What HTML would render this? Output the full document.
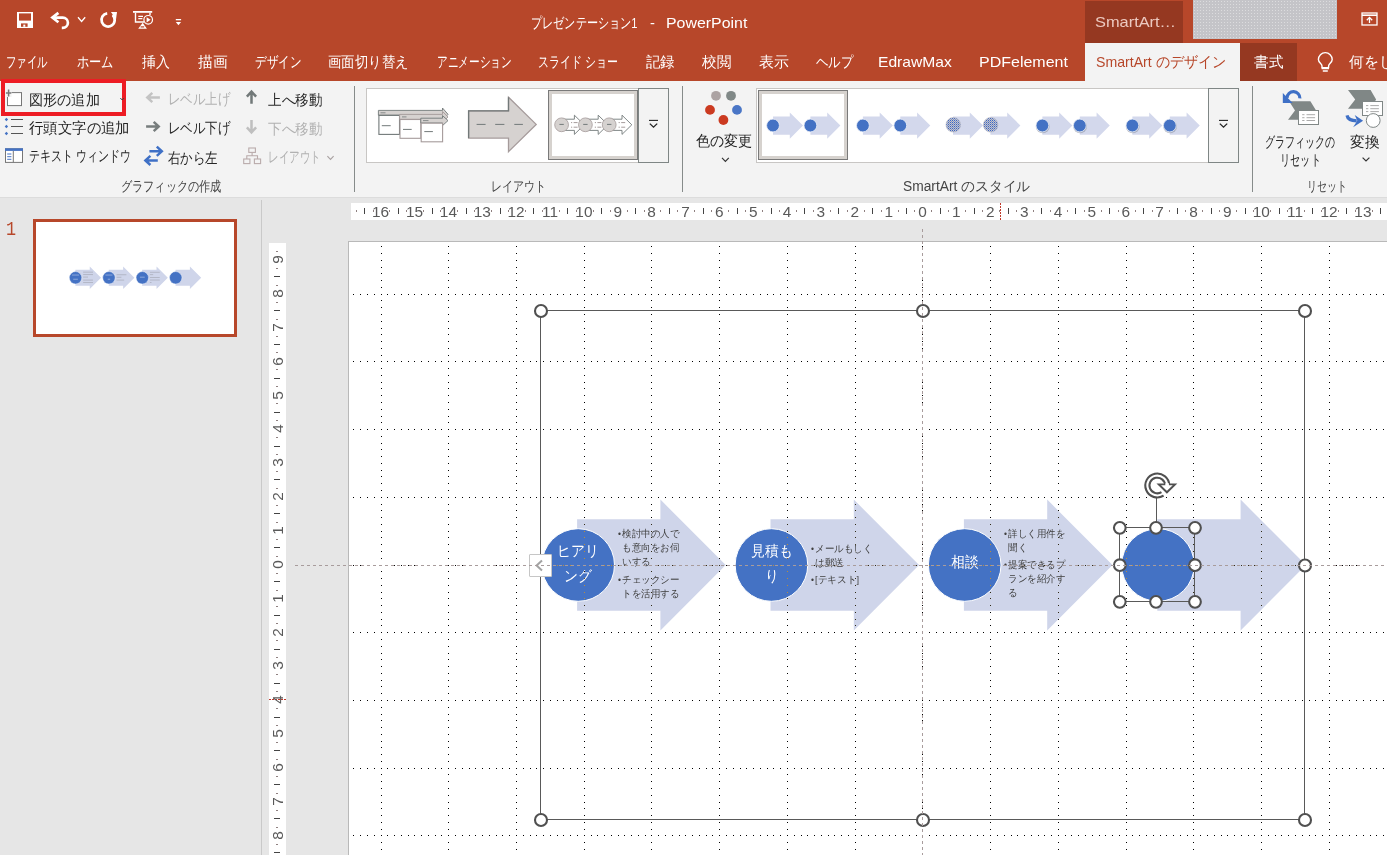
<!DOCTYPE html>
<html lang="ja"><head><meta charset="utf-8"><title>PowerPoint</title><style>
html,body{margin:0;padding:0;}
body{width:1387px;height:855px;overflow:hidden;position:relative;background:#e6e6e6;font-family:"Liberation Sans",sans-serif;}
.a{position:absolute;}
.rn{position:absolute;width:30px;text-align:center;font-size:15.4px;line-height:17px;color:#595959;}
.rv{position:absolute;width:30px;height:17px;text-align:center;font-size:15.4px;line-height:17px;color:#595959;transform:rotate(-90deg);}
.t{position:absolute;white-space:nowrap;transform-origin:0 50%;display:block;}
svg{position:absolute;left:0;top:0;overflow:visible;}
</style></head>
<body>
<div class="a" id="titlebar" style="left:0;top:0;width:1387px;height:81px;background:#B7472A"></div>
<div class="a" style="left:1085px;top:1px;width:98px;height:43px;background:#953821"></div>
<div class="a" style="left:1193px;top:0;width:144px;height:39px;background:#c4c4c8 radial-gradient(circle,#dcdcde 0.7px,rgba(220,220,222,0) 1px) 0 0/3px 3px"></div>
<div class="a" style="left:1085px;top:43px;width:155px;height:38px;background:#f3f3f3"></div>
<div class="a" style="left:1240px;top:43px;width:57px;height:38px;background:#953821"></div>
<span class="t" style="left:531.2px;top:11.8px;font-size:15px;line-height:21px;color:#fff;transform:scaleX(0.7430);">プレゼンテーション1</span>
<span class="t" style="left:650.1px;top:11.8px;font-size:15px;line-height:21px;color:#fff;transform:scaleX(0.9800);">-</span>
<span class="t" style="left:665.8px;top:12.3px;font-size:15.5px;line-height:22px;color:#fff;transform:scaleX(1.0269);">PowerPoint</span>
<span class="t" style="left:1094.5px;top:11.0px;font-size:15px;line-height:21px;color:#ecc9c0;transform:scaleX(1.0918);">SmartArt…</span>
<span class="t" style="left:5.8px;top:50.8px;font-size:15px;line-height:21px;color:#fff;transform:scaleX(0.6933);">ファイル</span>
<span class="t" style="left:77.3px;top:50.8px;font-size:15px;line-height:21px;color:#fff;transform:scaleX(0.8133);">ホーム</span>
<span class="t" style="left:141.6px;top:50.8px;font-size:15px;line-height:21px;color:#fff;transform:scaleX(0.9267);">挿入</span>
<span class="t" style="left:198.2px;top:50.8px;font-size:15px;line-height:21px;color:#fff;transform:scaleX(0.9833);">描画</span>
<span class="t" style="left:254.8px;top:50.8px;font-size:15px;line-height:21px;color:#fff;transform:scaleX(0.7683);">デザイン</span>
<span class="t" style="left:328.0px;top:50.8px;font-size:15px;line-height:21px;color:#fff;transform:scaleX(0.8922);">画面切り替え</span>
<span class="t" style="left:436.9px;top:50.8px;font-size:15px;line-height:21px;color:#fff;transform:scaleX(0.7105);">アニメーション</span>
<span class="t" style="left:537.6px;top:50.8px;font-size:15px;line-height:21px;color:#fff;transform:scaleX(0.7291);">スライド ショー</span>
<span class="t" style="left:646.0px;top:50.8px;font-size:15px;line-height:21px;color:#fff;transform:scaleX(0.9600);">記録</span>
<span class="t" style="left:702.0px;top:50.8px;font-size:15px;line-height:21px;color:#fff;transform:scaleX(0.9667);">校閲</span>
<span class="t" style="left:758.9px;top:50.8px;font-size:15px;line-height:21px;color:#fff;transform:scaleX(0.9933);">表示</span>
<span class="t" style="left:815.5px;top:50.8px;font-size:15px;line-height:21px;color:#fff;transform:scaleX(0.8267);">ヘルプ</span>
<span class="t" style="left:878.2px;top:50.8px;font-size:15px;line-height:21px;color:#fff;transform:scaleX(1.0415);">EdrawMax</span>
<span class="t" style="left:978.9px;top:50.8px;font-size:15px;line-height:21px;color:#fff;transform:scaleX(1.0663);">PDFelement</span>
<span class="t" style="left:1096.3px;top:51.0px;font-size:15px;line-height:21px;color:#B7472A;transform:scaleX(0.9419);">SmartArt のデザイン</span>
<span class="t" style="left:1254.4px;top:51.0px;font-size:15px;line-height:21px;color:#fff;transform:scaleX(0.9733);">書式</span>
<span class="t" style="left:1349.4px;top:51.0px;font-size:15px;line-height:21px;color:#fff;transform:scaleX(0.9911);">何をし</span>
<div class="a" id="ribbon" style="left:0;top:81px;width:1387px;height:116px;background:#f3f3f3;border-bottom:1px solid #dcdcdc"></div>
<div class="a" style="left:354px;top:86px;width:1px;height:106px;background:#868b8a"></div>
<div class="a" style="left:682px;top:86px;width:1px;height:106px;background:#868b8a"></div>
<div class="a" style="left:1252px;top:86px;width:1px;height:106px;background:#868b8a"></div>
<span class="t" style="left:121.0px;top:176.0px;font-size:14px;line-height:20px;color:#444;transform:scaleX(0.7976);">グラフィックの作成</span>
<span class="t" style="left:491.3px;top:176.0px;font-size:14px;line-height:20px;color:#444;transform:scaleX(0.7857);">レイアウト</span>
<span class="t" style="left:903.3px;top:176.0px;font-size:14px;line-height:20px;color:#444;transform:scaleX(0.9851);">SmartArt のスタイル</span>
<span class="t" style="left:1306.7px;top:176.0px;font-size:14px;line-height:20px;color:#444;transform:scaleX(0.7125);">リセット</span>
<span class="t" style="left:28.5px;top:88.5px;font-size:15px;line-height:21px;color:#262626;transform:scaleX(0.9427);">図形の追加</span>
<span class="t" style="left:28.5px;top:117.0px;font-size:15px;line-height:21px;color:#262626;transform:scaleX(0.9610);">行頭文字の追加</span>
<span class="t" style="left:28.5px;top:145.2px;font-size:15px;line-height:21px;color:#262626;transform:scaleX(0.7293);">テキスト ウィンドウ</span>
<span class="t" style="left:167.8px;top:87.5px;font-size:15px;line-height:21px;color:#b1b1b1;transform:scaleX(0.8307);">レベル上げ</span>
<span class="t" style="left:167.8px;top:116.5px;font-size:15px;line-height:21px;color:#262626;transform:scaleX(0.8307);">レベル下げ</span>
<span class="t" style="left:167.8px;top:146.5px;font-size:15px;line-height:21px;color:#262626;transform:scaleX(0.8283);">右から左</span>
<span class="t" style="left:267.5px;top:88.5px;font-size:15px;line-height:21px;color:#262626;transform:scaleX(0.9033);">上へ移動</span>
<span class="t" style="left:267.5px;top:117.5px;font-size:15px;line-height:21px;color:#b1b1b1;transform:scaleX(0.9033);">下へ移動</span>
<span class="t" style="left:267.5px;top:145.5px;font-size:15px;line-height:21px;color:#b1b1b1;transform:scaleX(0.7067);">レイアウト</span>
<div class="a" style="left:1px;top:79.3px;width:117.4px;height:28.5px;border:4.8px solid #ed1c24"></div>
<div class="a" style="left:366px;top:88px;width:273px;height:75px;background:#fff;border:1px solid #c8c6c4;box-sizing:border-box"></div>
<div class="a" style="left:638px;top:88px;width:31px;height:75px;background:#f3f3f3;border:1px solid #7f8685;box-sizing:border-box"></div>
<div class="a" style="left:756px;top:88px;width:453px;height:75px;background:#fff;border:1px solid #c8c6c4;box-sizing:border-box"></div>
<div class="a" style="left:1208px;top:88px;width:31px;height:75px;background:#f3f3f3;border:1px solid #7f8685;box-sizing:border-box"></div>
<div class="a" style="left:548px;top:90px;width:90px;height:70px;background:#fff;border:4px solid #d6d2ce;outline:1px solid #7a7a7a;outline-offset:-1px;box-sizing:border-box"></div>
<div class="a" style="left:758px;top:90px;width:90px;height:70px;background:#fff;border:4px solid #d6d2ce;outline:1px solid #7a7a7a;outline-offset:-1px;box-sizing:border-box"></div>
<span class="t" style="left:695.6px;top:130.1px;font-size:15px;line-height:21px;color:#262626;transform:scaleX(0.9383);">色の変更</span>
<span class="t" style="left:1265.4px;top:130.5px;font-size:15px;line-height:21px;color:#262626;transform:scaleX(0.6686);">グラフィックの</span>
<span class="t" style="left:1280.0px;top:148.8px;font-size:15px;line-height:21px;color:#262626;transform:scaleX(0.6783);">リセット</span>
<span class="t" style="left:1350.4px;top:130.5px;font-size:15px;line-height:21px;color:#262626;transform:scaleX(0.9833);">変換</span>
<svg width="1387" height="200" viewBox="0 0 1387 200">
<defs><pattern id="tex" width="2" height="2" patternUnits="userSpaceOnUse"><rect width="2" height="2" fill="#c4c4cc"/><rect width="1" height="1" fill="#3a66c4"/><rect x="1" y="1" width="1" height="1" fill="#7f93c4"/></pattern></defs>
<rect x="17" y="12" width="16" height="16" fill="#fff"/>
<rect x="19" y="13.4" width="12" height="7.2" fill="#B7472A"/>
<rect x="21" y="23.4" width="6.6" height="3.4" fill="#B7472A"/>
<rect x="23.3" y="24.6" width="2" height="2.2" fill="#fff"/>
<path d="M53 17.6 H62.8 A5.1 5.1 0 0 1 62.8 27.8 H61.8" fill="none" stroke="#fff" stroke-width="2.7"/>
<path d="M58.4 12.9 L52.4 17.6 L58.4 22.3" fill="none" stroke="#fff" stroke-width="2.7" stroke-linejoin="miter"/>
<path d="M78 17.3 L81.6 21.4 L85.2 17.3" fill="none" stroke="#fff" stroke-width="1.3"/>
<path d="M112.5 15.0 A6.6 6.6 0 1 1 107.2 13.36" fill="none" stroke="#fff" stroke-width="2.7"/>
<path d="M109.7 11 L112.2 20.5" stroke="#B7472A" stroke-width="1.5"/>
<path d="M110.9 11.9 L117 11.9 L116 19.3 Z" fill="#fff"/>
<rect x="133" y="11" width="19.2" height="1.8" fill="#fff"/>
<path d="M135.5 12.8 V22 H144" fill="none" stroke="#fff" stroke-width="1.4"/>
<path d="M150 12.8 V15" fill="none" stroke="#fff" stroke-width="1.4"/>
<path d="M138.3 16.4 H143 M138.3 18.7 H142.4" fill="none" stroke="#fff" stroke-width="1.2"/>
<circle cx="148.2" cy="19.8" r="4.3" fill="none" stroke="#fff" stroke-width="1.2"/>
<path d="M146.6 17.2 L150.6 19.8 L146.6 22.4 Z" fill="#fff"/>
<path d="M142.7 22.8 L146.9 28.8 L138.2 28.8 Z" fill="#fff"/>
<rect x="140.6" y="26.3" width="3.6" height="1.2" fill="#B7472A"/>
<rect x="175.8" y="19" width="5.3" height="1.3" fill="#fff"/>
<path d="M175.8 22 H181.1 L178.45 25.2 Z" fill="#fff"/>
<rect x="1362" y="13" width="15" height="12" fill="none" stroke="#fff" stroke-width="1.3"/>
<path d="M1362 15.2 H1377" stroke="#fff" stroke-width="1.6"/>
<path d="M1369.5 23 V17.6 M1366.8 20.2 L1369.5 17.4 L1372.2 20.2" fill="none" stroke="#fff" stroke-width="1.3"/>
<path d="M1322 67.6 V66 C1322 63.8 1318.4 62.6 1318.4 59.5 A6.9 6.9 0 0 1 1332.2 59.5 C1332.2 62.6 1328.6 63.8 1328.6 66 V67.6 Z" fill="none" stroke="#fff" stroke-width="1.4"/>
<path d="M1321.6 68.4 H1329 M1322.8 71 H1327.8" stroke="#fff" stroke-width="1.6"/>
<rect x="7.5" y="92.6" width="14" height="13" fill="#fff" stroke="#767676" stroke-width="1"/>
<rect x="5.6" y="88.6" width="6" height="8.4" fill="#f3f3f3"/>
<path d="M8.6 89.6 V96.4 M5.9 92.9 H11.3" stroke="#767676" stroke-width="1.5"/>
<path d="M120.3 98 L122.2 100 L124.1 98" fill="none" stroke="#444" stroke-width="1"/>
<path d="M6.4 117.8 l1.7 1.7 l-1.7 1.7 l-1.7 -1.7 Z" fill="#4472c4"/>
<rect x="11" y="119.0" width="12" height="1" fill="#555"/>
<path d="M6.4 124.8 l1.7 1.7 l-1.7 1.7 l-1.7 -1.7 Z" fill="#4472c4"/>
<rect x="11" y="126.0" width="12" height="1" fill="#555"/>
<path d="M6.4 131.8 l1.7 1.7 l-1.7 1.7 l-1.7 -1.7 Z" fill="#4472c4"/>
<rect x="11" y="133.0" width="12" height="1" fill="#555"/>
<rect x="5.5" y="148.8" width="17" height="13.6" fill="#fff" stroke="#767676" stroke-width="1"/>
<rect x="5" y="148.3" width="18" height="2.6" fill="#4472c4"/>
<path d="M13.3 151 V162.4" stroke="#767676" stroke-width="1"/>
<path d="M7.2 154 H11.4 M7.2 156.7 H11.4 M7.2 159.3 H11.4" stroke="#4472c4" stroke-width="1"/>
<path d="M159.9 97.5 H147.6 M152.3 92.9 L147.3 97.5 L152.3 102.1" fill="none" stroke="#c3c3c3" stroke-width="2.5"/>
<path d="M146.1 126.5 H158.4 M153.7 121.9 L158.7 126.5 L153.7 131.1" fill="none" stroke="#777d7d" stroke-width="2.5"/>
<path d="M149.4 151.3 H161.5 M156.8 146.7 L161.8 151.3 L156.8 155.9" fill="none" stroke="#3f70c6" stroke-width="2.5"/>
<path d="M157.8 160.4 H145.7 M150.4 155.8 L145.4 160.4 L150.4 165.0" fill="none" stroke="#3f70c6" stroke-width="2.5"/>
<path d="M251.5 103.8 V91.9 M246.9 96.6 L251.5 91.6 L256.1 96.6" fill="none" stroke="#727979" stroke-width="2.5"/>
<path d="M251.5 120.0 V132.1 M246.9 127.4 L251.5 132.4 L256.1 127.4" fill="none" stroke="#bfbfbf" stroke-width="2.5"/>
<rect x="248.8" y="148" width="6.6" height="4.4" fill="none" stroke="#b9abab" stroke-width="1.1"/>
<rect x="243.7" y="159" width="6.2" height="4.6" fill="none" stroke="#b9abab" stroke-width="1.1"/>
<rect x="254.4" y="159" width="6.2" height="4.6" fill="none" stroke="#b9abab" stroke-width="1.1"/>
<path d="M252.1 152.4 V155.8 M246.8 159 V155.8 H257.5 V159" fill="none" stroke="#b9abab" stroke-width="1.1"/>
<path d="M327.4 156.2 L330.5 159.4 L333.6 156.2" fill="none" stroke="#a8a0a0" stroke-width="1.1"/>
<path d="M378.4 110.4 H442.5 V108 L448 114.3 L442.5 120.5 V115.2 H378.4 Z" fill="#d6d2d0" stroke="#727979" stroke-width="0.9"/>
<rect x="378.9" y="115.4" width="20.6" height="19" fill="#fff" stroke="#727979" stroke-width="1.1"/>
<path d="M399.6 114.4 H442.5 V111.5 L448 117 L442.5 122.5 V119.3 H399.6 Z" fill="#d6d2d0" stroke="#a59b9b" stroke-width="0.9"/>
<rect x="400" y="119.5" width="20.8" height="18.8" fill="#fff" stroke="#a59b9b" stroke-width="1.1"/>
<path d="M420.8 118.2 H442.5 V115.6 L448 120.6 L442.5 125.6 V123 H420.8 Z" fill="#d6d2d0" stroke="#727979" stroke-width="0.9"/>
<rect x="421.2" y="123.2" width="21.4" height="18.6" fill="#fff" stroke="#a59b9b" stroke-width="1.1"/>
<path d="M381.8 125.7 H390.7 M403 129.4 H411.7 M424.3 131.6 H432.9" stroke="#727979" stroke-width="1"/>
<path d="M380.5 112.8 H385.5 M402 116.9 H406.5 M423 120.6 H428.5" stroke="#727979" stroke-width="0.8"/>
<path d="M468.6 110.9 H508.5 V97.2 L536.2 124.4 L508.5 151.6 V138.1 H468.6 Z" fill="#d6d2d0" stroke="#a59b9b" stroke-width="1.3" stroke-linejoin="miter"/>
<path d="M468.6 138.1 V110.9 H508.5 V97.2" fill="none" stroke="#727979" stroke-width="1.3"/>
<path d="M476.6 124.4 H485.6 M495.2 124.4 H504.4 M514.3 124.4 H522.9" stroke="#727979" stroke-width="1"/>
<path d="M561.6 119.2 H574.4 V115.2 L584.2 124.8 L574.4 134.4 V130.4 H561.6 Z" fill="#fff" stroke="#727979" stroke-width="0.9"/>
<path d="M571.0 122.6 h1.2 M573.6 122.6 h4 M571.0 127.2 h1.2 M573.6 127.2 h4" stroke="#a59b9b" stroke-width="1"/>
<path d="M585.4 119.2 H598.2 V115.2 L608.0 124.8 L598.2 134.4 V130.4 H585.4 Z" fill="#fff" stroke="#727979" stroke-width="0.9"/>
<path d="M594.8 122.6 h1.2 M597.4 122.6 h4 M594.8 127.2 h1.2 M597.4 127.2 h4" stroke="#a59b9b" stroke-width="1"/>
<path d="M609.2 119.2 H622.0 V115.2 L631.8 124.8 L622.0 134.4 V130.4 H609.2 Z" fill="#fff" stroke="#727979" stroke-width="0.9"/>
<path d="M618.6 122.6 h1.2 M621.2 122.6 h4 M618.6 127.2 h1.2 M621.2 127.2 h4" stroke="#a59b9b" stroke-width="1"/>
<circle cx="561.6" cy="124.8" r="6.9" fill="#d6d2d0" stroke="#a59b9b" stroke-width="0.8"/>
<path d="M559.4 124.4 h4.4" stroke="#727979" stroke-width="1"/>
<circle cx="585.4" cy="124.8" r="6.9" fill="#d6d2d0" stroke="#a59b9b" stroke-width="0.8"/>
<path d="M583.2 124.4 h4.4" stroke="#727979" stroke-width="1"/>
<circle cx="609.2" cy="124.8" r="6.9" fill="#d6d2d0" stroke="#a59b9b" stroke-width="0.8"/>
<path d="M607.0 124.4 h4.4" stroke="#727979" stroke-width="1"/>
<path d="M649.0 120.4 H658.0" stroke="#222" stroke-width="1.1"/>
<path d="M649.8 123.6 L653.5 127.2 L657.2 123.6" fill="none" stroke="#222" stroke-width="1.3"/>
<path d="M1219.0 120.4 H1228.0" stroke="#222" stroke-width="1.1"/>
<path d="M1219.8 123.6 L1223.5 127.2 L1227.2 123.6" fill="none" stroke="#222" stroke-width="1.3"/>
<circle cx="716.0" cy="95.8" r="4.9" fill="#aca3a3"/>
<circle cx="731.0" cy="95.8" r="4.9" fill="#808887"/>
<circle cx="710.0" cy="109.9" r="4.9" fill="#cb3a20"/>
<circle cx="737.0" cy="109.9" r="4.9" fill="#4a76c6"/>
<circle cx="723.4" cy="120.0" r="4.9" fill="#cb3a20"/>
<path d="M722 157.9 L725.4 161.3 L728.8 157.9" fill="none" stroke="#333" stroke-width="1.2"/>
<path d="M1362.6 157.6 L1366 161 L1369.4 157.6" fill="none" stroke="#333" stroke-width="1.2"/>
<path d="M773.0 116.4 H789.8 V112.4 L803.0 125.5 L789.8 138.7 V134.8 H773.0 Z" fill="#d3d8ec"/>
<path d="M810.4 116.4 H827.2 V112.4 L840.4 125.5 L827.2 138.7 V134.8 H810.4 Z" fill="#d3d8ec"/>
<circle cx="773.0" cy="125.5" r="6.4" fill="#4472c4" stroke="#eef0f7" stroke-width="0.8"/>
<circle cx="810.4" cy="125.5" r="6.4" fill="#4472c4" stroke="#eef0f7" stroke-width="0.8"/>
<path d="M862.9 116.4 H879.7 V112.4 L892.9 125.5 L879.7 138.7 V134.8 H862.9 Z" fill="#d3d8ec"/>
<path d="M900.3 116.4 H917.1 V112.4 L930.3 125.5 L917.1 138.7 V134.8 H900.3 Z" fill="#d3d8ec"/>
<circle cx="862.9" cy="125.5" r="6.4" fill="#4472c4" stroke="#eef0f7" stroke-width="0.8"/>
<circle cx="900.3" cy="125.5" r="6.4" fill="#4472c4" stroke="#eef0f7" stroke-width="0.8"/>
<path d="M953.0 116.4 H969.8 V112.4 L983.0 125.5 L969.8 138.7 V134.8 H953.0 Z" fill="#d3d8ec"/>
<path d="M990.4 116.4 H1007.2 V112.4 L1020.4 125.5 L1007.2 138.7 V134.8 H990.4 Z" fill="#d3d8ec"/>
<circle cx="953.3" cy="124.8" r="7.3" fill="url(#tex)" stroke="#b9b9c2" stroke-width="0.6"/>
<circle cx="990.7" cy="124.8" r="7.3" fill="url(#tex)" stroke="#b9b9c2" stroke-width="0.6"/>
<path d="M1042.4 116.4 H1059.2 V112.4 L1072.4 125.5 L1059.2 138.7 V134.8 H1042.4 Z" fill="#d3d8ec"/>
<path d="M1079.8 116.4 H1096.6 V112.4 L1109.8 125.5 L1096.6 138.7 V134.8 H1079.8 Z" fill="#d3d8ec"/>
<circle cx="1042.7" cy="126.4" r="6.9" fill="#8a8f9c" opacity="0.55"/>
<circle cx="1042.4" cy="125.5" r="6.4" fill="#4472c4" stroke="#eef0f7" stroke-width="0.8"/>
<circle cx="1080.1" cy="126.4" r="6.9" fill="#8a8f9c" opacity="0.55"/>
<circle cx="1079.8" cy="125.5" r="6.4" fill="#4472c4" stroke="#eef0f7" stroke-width="0.8"/>
<path d="M1132.4 116.4 H1149.2 V112.4 L1162.4 125.5 L1149.2 138.7 V134.8 H1132.4 Z" fill="#d3d8ec"/>
<path d="M1169.8 116.4 H1186.6 V112.4 L1199.8 125.5 L1186.6 138.7 V134.8 H1169.8 Z" fill="#d3d8ec"/>
<circle cx="1132.7" cy="126.4" r="6.9" fill="#8a8f9c" opacity="0.55"/>
<circle cx="1132.4" cy="125.5" r="6.4" fill="#4472c4" stroke="#eef0f7" stroke-width="0.8"/>
<circle cx="1170.1" cy="126.4" r="6.9" fill="#8a8f9c" opacity="0.55"/>
<circle cx="1169.8" cy="125.5" r="6.4" fill="#4472c4" stroke="#eef0f7" stroke-width="0.8"/>
<path d="M1289.1 101.3 L1310.4 101.3 L1316.1 110.6 L1310.4 119.8 L1288.0 119.8 L1295.0 110.6Z" fill="#808786"/>
<rect x="1298.5" y="110.5" width="20.0" height="14.0" fill="#fff" stroke="#808786" stroke-width="1"/>
<path d="M1302.2 114.7 H1304.5 M1306.5 114.7 H1315.1" stroke="#aaa" stroke-width="1"/>
<path d="M1302.2 117.7 H1304.5 M1306.5 117.7 H1315.1" stroke="#aaa" stroke-width="1"/>
<path d="M1302.2 120.5 H1304.5 M1306.5 120.5 H1315.1" stroke="#aaa" stroke-width="1"/>
<path d="M1299.9 98.4 A6.4 6.4 0 0 0 1287.0 97.9" fill="none" stroke="#3f70c6" stroke-width="3.2"/>
<path d="M1282.8 93.1 L1282.8 103.0 L1292.7 103.0Z" fill="#3f70c6"/>
<path d="M1348.0 90.0 L1370.6 90.0 L1376.1 99.4 L1370.6 108.7 L1348.0 108.7 L1355.2 99.4Z" fill="#808786"/>
<rect x="1362.5" y="101.5" width="20.0" height="14.0" fill="#fff" stroke="#808786" stroke-width="1"/>
<path d="M1366.0 105.6 H1368.3 M1370.3 105.6 H1378.9" stroke="#aaa" stroke-width="1"/>
<path d="M1366.0 108.7 H1368.3 M1370.3 108.7 H1378.9" stroke="#aaa" stroke-width="1"/>
<path d="M1366.0 111.6 H1368.3 M1370.3 111.6 H1378.9" stroke="#aaa" stroke-width="1"/>
<circle cx="1373.2" cy="120.5" r="6.9" fill="#fff" stroke="#808786" stroke-width="1"/>
<path d="M1347.0 115.4 Q1348.0 120.8 1356.7 120.8" fill="none" stroke="#3f70c6" stroke-width="3.2"/>
<path d="M1354.7 114.9 L1363.1 120.8 L1353.1 127.2 L1357.3 120.8Z" fill="#3f70c6"/>
</svg>
<div class="a" style="left:261px;top:200px;width:1px;height:655px;background:#c9c9c9"></div>
<span class="a" style="left:6.4px;top:218px;font-family:'Liberation Mono',monospace;font-size:21px;line-height:24px;transform:scaleX(0.8);transform-origin:0 0;color:#B7472A">1</span>
<div class="a" style="left:33px;top:219px;width:198px;height:111.5px;background:#fff;border:3px solid #B7472A"></div>
<div class="a" style="left:351px;top:203px;width:1036px;height:17px;background:#fff"></div>
<div class="a" style="left:269px;top:243px;width:17px;height:612px;background:#fff"></div>
<svg width="1387" height="855" viewBox="0 0 1387 855" shape-rendering="crispEdges">
<rect x="356" y="210" width="1" height="2" fill="#8f8080"/>
<rect x="364" y="208" width="1" height="6" fill="#444"/>
<rect x="373" y="210" width="1" height="2" fill="#8f8080"/>
<rect x="389" y="210" width="1" height="2" fill="#8f8080"/>
<rect x="398" y="208" width="1" height="6" fill="#444"/>
<rect x="406" y="210" width="1" height="2" fill="#8f8080"/>
<rect x="423" y="210" width="1" height="2" fill="#8f8080"/>
<rect x="432" y="208" width="1" height="6" fill="#444"/>
<rect x="440" y="210" width="1" height="2" fill="#8f8080"/>
<rect x="457" y="210" width="1" height="2" fill="#8f8080"/>
<rect x="466" y="208" width="1" height="6" fill="#444"/>
<rect x="474" y="210" width="1" height="2" fill="#8f8080"/>
<rect x="491" y="210" width="1" height="2" fill="#8f8080"/>
<rect x="500" y="208" width="1" height="6" fill="#444"/>
<rect x="508" y="210" width="1" height="2" fill="#8f8080"/>
<rect x="525" y="210" width="1" height="2" fill="#8f8080"/>
<rect x="533" y="208" width="1" height="6" fill="#444"/>
<rect x="542" y="210" width="1" height="2" fill="#8f8080"/>
<rect x="559" y="210" width="1" height="2" fill="#8f8080"/>
<rect x="567" y="208" width="1" height="6" fill="#444"/>
<rect x="576" y="210" width="1" height="2" fill="#8f8080"/>
<rect x="593" y="210" width="1" height="2" fill="#8f8080"/>
<rect x="601" y="208" width="1" height="6" fill="#444"/>
<rect x="610" y="210" width="1" height="2" fill="#8f8080"/>
<rect x="627" y="210" width="1" height="2" fill="#8f8080"/>
<rect x="635" y="208" width="1" height="6" fill="#444"/>
<rect x="644" y="210" width="1" height="2" fill="#8f8080"/>
<rect x="660" y="210" width="1" height="2" fill="#8f8080"/>
<rect x="669" y="208" width="1" height="6" fill="#444"/>
<rect x="677" y="210" width="1" height="2" fill="#8f8080"/>
<rect x="694" y="210" width="1" height="2" fill="#8f8080"/>
<rect x="703" y="208" width="1" height="6" fill="#444"/>
<rect x="711" y="210" width="1" height="2" fill="#8f8080"/>
<rect x="728" y="210" width="1" height="2" fill="#8f8080"/>
<rect x="737" y="208" width="1" height="6" fill="#444"/>
<rect x="745" y="210" width="1" height="2" fill="#8f8080"/>
<rect x="762" y="210" width="1" height="2" fill="#8f8080"/>
<rect x="771" y="208" width="1" height="6" fill="#444"/>
<rect x="779" y="210" width="1" height="2" fill="#8f8080"/>
<rect x="796" y="210" width="1" height="2" fill="#8f8080"/>
<rect x="804" y="208" width="1" height="6" fill="#444"/>
<rect x="813" y="210" width="1" height="2" fill="#8f8080"/>
<rect x="830" y="210" width="1" height="2" fill="#8f8080"/>
<rect x="838" y="208" width="1" height="6" fill="#444"/>
<rect x="847" y="210" width="1" height="2" fill="#8f8080"/>
<rect x="864" y="210" width="1" height="2" fill="#8f8080"/>
<rect x="872" y="208" width="1" height="6" fill="#444"/>
<rect x="881" y="210" width="1" height="2" fill="#8f8080"/>
<rect x="898" y="210" width="1" height="2" fill="#8f8080"/>
<rect x="906" y="208" width="1" height="6" fill="#444"/>
<rect x="914" y="210" width="1" height="2" fill="#8f8080"/>
<rect x="931" y="210" width="1" height="2" fill="#8f8080"/>
<rect x="940" y="208" width="1" height="6" fill="#444"/>
<rect x="948" y="210" width="1" height="2" fill="#8f8080"/>
<rect x="965" y="210" width="1" height="2" fill="#8f8080"/>
<rect x="974" y="208" width="1" height="6" fill="#444"/>
<rect x="982" y="210" width="1" height="2" fill="#8f8080"/>
<rect x="999" y="210" width="1" height="2" fill="#8f8080"/>
<rect x="1008" y="208" width="1" height="6" fill="#444"/>
<rect x="1016" y="210" width="1" height="2" fill="#8f8080"/>
<rect x="1033" y="210" width="1" height="2" fill="#8f8080"/>
<rect x="1041" y="208" width="1" height="6" fill="#444"/>
<rect x="1050" y="210" width="1" height="2" fill="#8f8080"/>
<rect x="1067" y="210" width="1" height="2" fill="#8f8080"/>
<rect x="1075" y="208" width="1" height="6" fill="#444"/>
<rect x="1084" y="210" width="1" height="2" fill="#8f8080"/>
<rect x="1101" y="210" width="1" height="2" fill="#8f8080"/>
<rect x="1109" y="208" width="1" height="6" fill="#444"/>
<rect x="1118" y="210" width="1" height="2" fill="#8f8080"/>
<rect x="1135" y="210" width="1" height="2" fill="#8f8080"/>
<rect x="1143" y="208" width="1" height="6" fill="#444"/>
<rect x="1152" y="210" width="1" height="2" fill="#8f8080"/>
<rect x="1169" y="210" width="1" height="2" fill="#8f8080"/>
<rect x="1177" y="208" width="1" height="6" fill="#444"/>
<rect x="1185" y="210" width="1" height="2" fill="#8f8080"/>
<rect x="1202" y="210" width="1" height="2" fill="#8f8080"/>
<rect x="1211" y="208" width="1" height="6" fill="#444"/>
<rect x="1219" y="210" width="1" height="2" fill="#8f8080"/>
<rect x="1236" y="210" width="1" height="2" fill="#8f8080"/>
<rect x="1245" y="208" width="1" height="6" fill="#444"/>
<rect x="1253" y="210" width="1" height="2" fill="#8f8080"/>
<rect x="1270" y="210" width="1" height="2" fill="#8f8080"/>
<rect x="1279" y="208" width="1" height="6" fill="#444"/>
<rect x="1287" y="210" width="1" height="2" fill="#8f8080"/>
<rect x="1304" y="210" width="1" height="2" fill="#8f8080"/>
<rect x="1312" y="208" width="1" height="6" fill="#444"/>
<rect x="1321" y="210" width="1" height="2" fill="#8f8080"/>
<rect x="1338" y="210" width="1" height="2" fill="#8f8080"/>
<rect x="1346" y="208" width="1" height="6" fill="#444"/>
<rect x="1355" y="210" width="1" height="2" fill="#8f8080"/>
<rect x="1372" y="210" width="1" height="2" fill="#8f8080"/>
<rect x="1380" y="208" width="1" height="6" fill="#444"/>
<rect x="276" y="251" width="2" height="1" fill="#8f8080"/>
<rect x="276" y="268" width="2" height="1" fill="#8f8080"/>
<rect x="274" y="276" width="6" height="1" fill="#444"/>
<rect x="276" y="285" width="2" height="1" fill="#8f8080"/>
<rect x="276" y="302" width="2" height="1" fill="#8f8080"/>
<rect x="274" y="310" width="6" height="1" fill="#444"/>
<rect x="276" y="319" width="2" height="1" fill="#8f8080"/>
<rect x="276" y="336" width="2" height="1" fill="#8f8080"/>
<rect x="274" y="344" width="6" height="1" fill="#444"/>
<rect x="276" y="352" width="2" height="1" fill="#8f8080"/>
<rect x="276" y="369" width="2" height="1" fill="#8f8080"/>
<rect x="274" y="378" width="6" height="1" fill="#444"/>
<rect x="276" y="386" width="2" height="1" fill="#8f8080"/>
<rect x="276" y="403" width="2" height="1" fill="#8f8080"/>
<rect x="274" y="412" width="6" height="1" fill="#444"/>
<rect x="276" y="420" width="2" height="1" fill="#8f8080"/>
<rect x="276" y="437" width="2" height="1" fill="#8f8080"/>
<rect x="274" y="446" width="6" height="1" fill="#444"/>
<rect x="276" y="454" width="2" height="1" fill="#8f8080"/>
<rect x="276" y="471" width="2" height="1" fill="#8f8080"/>
<rect x="274" y="479" width="6" height="1" fill="#444"/>
<rect x="276" y="488" width="2" height="1" fill="#8f8080"/>
<rect x="276" y="505" width="2" height="1" fill="#8f8080"/>
<rect x="274" y="513" width="6" height="1" fill="#444"/>
<rect x="276" y="522" width="2" height="1" fill="#8f8080"/>
<rect x="276" y="539" width="2" height="1" fill="#8f8080"/>
<rect x="274" y="547" width="6" height="1" fill="#444"/>
<rect x="276" y="556" width="2" height="1" fill="#8f8080"/>
<rect x="276" y="573" width="2" height="1" fill="#8f8080"/>
<rect x="274" y="581" width="6" height="1" fill="#444"/>
<rect x="276" y="590" width="2" height="1" fill="#8f8080"/>
<rect x="276" y="606" width="2" height="1" fill="#8f8080"/>
<rect x="274" y="615" width="6" height="1" fill="#444"/>
<rect x="276" y="623" width="2" height="1" fill="#8f8080"/>
<rect x="276" y="640" width="2" height="1" fill="#8f8080"/>
<rect x="274" y="649" width="6" height="1" fill="#444"/>
<rect x="276" y="657" width="2" height="1" fill="#8f8080"/>
<rect x="276" y="674" width="2" height="1" fill="#8f8080"/>
<rect x="274" y="683" width="6" height="1" fill="#444"/>
<rect x="276" y="691" width="2" height="1" fill="#8f8080"/>
<rect x="276" y="708" width="2" height="1" fill="#8f8080"/>
<rect x="274" y="717" width="6" height="1" fill="#444"/>
<rect x="276" y="725" width="2" height="1" fill="#8f8080"/>
<rect x="276" y="742" width="2" height="1" fill="#8f8080"/>
<rect x="274" y="750" width="6" height="1" fill="#444"/>
<rect x="276" y="759" width="2" height="1" fill="#8f8080"/>
<rect x="276" y="776" width="2" height="1" fill="#8f8080"/>
<rect x="274" y="784" width="6" height="1" fill="#444"/>
<rect x="276" y="793" width="2" height="1" fill="#8f8080"/>
<rect x="276" y="810" width="2" height="1" fill="#8f8080"/>
<rect x="274" y="818" width="6" height="1" fill="#444"/>
<rect x="276" y="827" width="2" height="1" fill="#8f8080"/>
<rect x="276" y="844" width="2" height="1" fill="#8f8080"/>
<rect x="274" y="852" width="6" height="1" fill="#444"/>
<line x1="1000.5" y1="203" x2="1000.5" y2="220" stroke="#c0392b" stroke-width="1" stroke-dasharray="2 1"/>
<line x1="269" y1="699.5" x2="286" y2="699.5" stroke="#c0392b" stroke-width="1" stroke-dasharray="2 1"/>
</svg>
<span class="rn" style="left:365.6px;top:202.7px">16</span>
<span class="rn" style="left:399.5px;top:202.7px">15</span>
<span class="rn" style="left:433.4px;top:202.7px">14</span>
<span class="rn" style="left:467.2px;top:202.7px">13</span>
<span class="rn" style="left:501.1px;top:202.7px">12</span>
<span class="rn" style="left:535.0px;top:202.7px">11</span>
<span class="rn" style="left:568.9px;top:202.7px">10</span>
<span class="rn" style="left:602.7px;top:202.7px">9</span>
<span class="rn" style="left:636.6px;top:202.7px">8</span>
<span class="rn" style="left:670.5px;top:202.7px">7</span>
<span class="rn" style="left:704.3px;top:202.7px">6</span>
<span class="rn" style="left:738.2px;top:202.7px">5</span>
<span class="rn" style="left:772.1px;top:202.7px">4</span>
<span class="rn" style="left:805.9px;top:202.7px">3</span>
<span class="rn" style="left:839.8px;top:202.7px">2</span>
<span class="rn" style="left:873.7px;top:202.7px">1</span>
<span class="rn" style="left:907.6px;top:202.7px">0</span>
<span class="rn" style="left:941.4px;top:202.7px">1</span>
<span class="rn" style="left:975.3px;top:202.7px">2</span>
<span class="rn" style="left:1009.2px;top:202.7px">3</span>
<span class="rn" style="left:1043.0px;top:202.7px">4</span>
<span class="rn" style="left:1076.9px;top:202.7px">5</span>
<span class="rn" style="left:1110.8px;top:202.7px">6</span>
<span class="rn" style="left:1144.6px;top:202.7px">7</span>
<span class="rn" style="left:1178.5px;top:202.7px">8</span>
<span class="rn" style="left:1212.4px;top:202.7px">9</span>
<span class="rn" style="left:1246.2px;top:202.7px">10</span>
<span class="rn" style="left:1280.1px;top:202.7px">11</span>
<span class="rn" style="left:1314.0px;top:202.7px">12</span>
<span class="rn" style="left:1347.9px;top:202.7px">13</span>
<span class="rv" style="left:262.3px;top:251.0px">9</span>
<span class="rv" style="left:262.3px;top:284.9px">8</span>
<span class="rv" style="left:262.3px;top:318.7px">7</span>
<span class="rv" style="left:262.3px;top:352.6px">6</span>
<span class="rv" style="left:262.3px;top:386.5px">5</span>
<span class="rv" style="left:262.3px;top:420.3px">4</span>
<span class="rv" style="left:262.3px;top:454.2px">3</span>
<span class="rv" style="left:262.3px;top:488.1px">2</span>
<span class="rv" style="left:262.3px;top:522.0px">1</span>
<span class="rv" style="left:262.3px;top:555.8px">0</span>
<span class="rv" style="left:262.3px;top:589.7px">1</span>
<span class="rv" style="left:262.3px;top:623.6px">2</span>
<span class="rv" style="left:262.3px;top:657.4px">3</span>
<span class="rv" style="left:262.3px;top:691.3px">4</span>
<span class="rv" style="left:262.3px;top:725.2px">5</span>
<span class="rv" style="left:262.3px;top:759.0px">6</span>
<span class="rv" style="left:262.3px;top:792.9px">7</span>
<span class="rv" style="left:262.3px;top:826.8px">8</span>
<div class="a" id="slide" style="left:348px;top:241px;width:1039px;height:614px;background:#fff;border-left:1px solid #b9b9b9;border-top:1px solid #b9b9b9;box-sizing:border-box"></div>
<svg width="1387" height="855" viewBox="0 0 1387 855">
<path d="M75.38 269.87 L89.76 269.87 L89.76 266.47 L101.03 277.76 L89.76 289.05 L89.76 285.65 L75.38 285.65Z" fill="#cfd5ea"/>
<path d="M108.76 269.87 L123.14 269.87 L123.14 266.47 L134.41 277.76 L123.14 289.05 L123.14 285.65 L108.76 285.65Z" fill="#cfd5ea"/>
<path d="M142.15 269.87 L156.53 269.87 L156.53 266.47 L167.80 277.76 L156.53 289.05 L156.53 285.65 L142.15 285.65Z" fill="#cfd5ea"/>
<path d="M175.53 269.87 L189.91 269.87 L189.91 266.47 L201.18 277.76 L189.91 289.05 L189.91 285.65 L175.53 285.65Z" fill="#cfd5ea"/>
<circle cx="75.55" cy="277.77" r="6.21" fill="#4472c4" stroke="#fff" stroke-width="0.4"/>
<circle cx="108.93" cy="277.77" r="6.21" fill="#4472c4" stroke="#fff" stroke-width="0.4"/>
<circle cx="142.32" cy="277.77" r="6.21" fill="#4472c4" stroke="#fff" stroke-width="0.4"/>
<circle cx="175.70" cy="277.77" r="6.21" fill="#4472c4" stroke="#fff" stroke-width="0.4"/>
<rect x="83.14" y="271.73" width="9.84" height="0.8" fill="#8c8c94" opacity="0.5"/>
<rect x="83.14" y="274.24" width="9.84" height="0.8" fill="#8c8c94" opacity="0.5"/>
<rect x="83.14" y="276.67" width="4.83" height="0.8" fill="#8c8c94" opacity="0.5"/>
<rect x="83.14" y="279.69" width="9.84" height="0.8" fill="#8c8c94" opacity="0.5"/>
<rect x="83.14" y="282.13" width="9.84" height="0.8" fill="#8c8c94" opacity="0.5"/>
<rect x="72.01" y="274.45" width="7.08" height="1.2" fill="#dfe7f6" opacity="0.38"/>
<rect x="73.22" y="278.68" width="4.66" height="1.2" fill="#dfe7f6" opacity="0.38"/>
<rect x="116.53" y="274.39" width="9.84" height="0.8" fill="#8c8c94" opacity="0.5"/>
<rect x="116.53" y="276.81" width="4.83" height="0.8" fill="#8c8c94" opacity="0.5"/>
<rect x="116.53" y="279.67" width="7.60" height="0.8" fill="#8c8c94" opacity="0.5"/>
<rect x="105.39" y="274.45" width="7.08" height="1.2" fill="#dfe7f6" opacity="0.38"/>
<rect x="107.73" y="278.68" width="2.42" height="1.2" fill="#dfe7f6" opacity="0.38"/>
<rect x="149.91" y="271.84" width="9.84" height="0.8" fill="#8c8c94" opacity="0.5"/>
<rect x="149.91" y="274.29" width="3.28" height="0.8" fill="#8c8c94" opacity="0.5"/>
<rect x="149.91" y="277.17" width="9.84" height="0.8" fill="#8c8c94" opacity="0.5"/>
<rect x="149.91" y="279.62" width="9.84" height="0.8" fill="#8c8c94" opacity="0.5"/>
<rect x="149.91" y="282.02" width="1.55" height="0.8" fill="#8c8c94" opacity="0.5"/>
<rect x="139.90" y="276.61" width="4.83" height="1.2" fill="#dfe7f6" opacity="0.38"/>
<path d="M577.10 519.30 L660.40 519.30 L660.40 499.60 L725.70 565.00 L660.40 630.40 L660.40 610.70 L577.10 610.70Z" fill="#cfd5ea"/>
<path d="M770.50 519.30 L853.80 519.30 L853.80 499.60 L919.10 565.00 L853.80 630.40 L853.80 610.70 L770.50 610.70Z" fill="#cfd5ea"/>
<path d="M963.90 519.30 L1047.20 519.30 L1047.20 499.60 L1112.50 565.00 L1047.20 630.40 L1047.20 610.70 L963.90 610.70Z" fill="#cfd5ea"/>
<path d="M1157.30 519.30 L1240.60 519.30 L1240.60 499.60 L1305.90 565.00 L1240.60 630.40 L1240.60 610.70 L1157.30 610.70Z" fill="#cfd5ea"/>
<circle cx="578.20" cy="565.0" r="36.3" fill="#4472c4" stroke="#fff" stroke-width="1"/>
<circle cx="771.45" cy="565.0" r="36.3" fill="#4472c4" stroke="#fff" stroke-width="1"/>
<circle cx="964.70" cy="565.0" r="36.3" fill="#4472c4" stroke="#fff" stroke-width="1"/>
<circle cx="1157.95" cy="565.0" r="36.3" fill="#4472c4" stroke="#fff" stroke-width="1"/>
</svg>
<span class="t" style="left:557.4px;top:541.4px;font-size:14.5px;line-height:20px;color:#fff;transform:scaleX(0.9200);">ヒアリ</span>
<span class="t" style="left:564.3px;top:565.9px;font-size:14.5px;line-height:20px;color:#fff;transform:scaleX(0.9200);">ング</span>
<span class="t" style="left:750.8px;top:541.4px;font-size:14.5px;line-height:20px;color:#fff;transform:scaleX(0.9200);">見積も</span>
<span class="t" style="left:764.6px;top:565.9px;font-size:14.5px;line-height:20px;color:#fff;transform:scaleX(0.9200);">り</span>
<span class="t" style="left:951.1px;top:552.4px;font-size:14.5px;line-height:20px;color:#fff;transform:scaleX(0.9200);">相談</span>
<span class="t" style="left:617.5px;top:526.5px;font-size:9.5px;line-height:13px;color:#404040;transform:scaleX(0.9014);">•</span>
<span class="t" style="left:622.0px;top:526.5px;font-size:9.5px;line-height:13px;color:#404040;transform:scaleX(0.9500);">検討中の人で</span>
<span class="t" style="left:622.0px;top:541.0px;font-size:9.5px;line-height:13px;color:#404040;transform:scaleX(0.9500);">も意向をお伺</span>
<span class="t" style="left:622.0px;top:555.1px;font-size:9.5px;line-height:13px;color:#404040;transform:scaleX(0.9500);">いする</span>
<span class="t" style="left:617.5px;top:572.6px;font-size:9.5px;line-height:13px;color:#404040;transform:scaleX(0.9014);">•</span>
<span class="t" style="left:622.0px;top:572.6px;font-size:9.5px;line-height:13px;color:#404040;transform:scaleX(0.9500);">チェックシー</span>
<span class="t" style="left:622.0px;top:586.7px;font-size:9.5px;line-height:13px;color:#404040;transform:scaleX(0.9500);">トを活用する</span>
<span class="t" style="left:810.8px;top:541.9px;font-size:9.5px;line-height:13px;color:#404040;transform:scaleX(0.9014);">•</span>
<span class="t" style="left:815.3px;top:541.9px;font-size:9.5px;line-height:13px;color:#404040;transform:scaleX(0.9500);">メールもしく</span>
<span class="t" style="left:815.3px;top:555.9px;font-size:9.5px;line-height:13px;color:#404040;transform:scaleX(0.9500);">は郵送</span>
<span class="t" style="left:810.8px;top:572.5px;font-size:9.5px;line-height:13px;color:#404040;transform:scaleX(0.9014);">•</span>
<span class="t" style="left:815.3px;top:572.5px;font-size:9.5px;line-height:13px;color:#404040;transform:scaleX(0.9717);">[テキスト]</span>
<span class="t" style="left:1003.6px;top:527.1px;font-size:9.5px;line-height:13px;color:#404040;transform:scaleX(0.9014);">•</span>
<span class="t" style="left:1008.1px;top:527.1px;font-size:9.5px;line-height:13px;color:#404040;transform:scaleX(0.9500);">詳しく用件を</span>
<span class="t" style="left:1008.1px;top:541.3px;font-size:9.5px;line-height:13px;color:#404040;transform:scaleX(0.9500);">聞く</span>
<span class="t" style="left:1003.6px;top:558.0px;font-size:9.5px;line-height:13px;color:#404040;transform:scaleX(0.9014);">•</span>
<span class="t" style="left:1008.1px;top:558.0px;font-size:9.5px;line-height:13px;color:#404040;transform:scaleX(0.9500);">提案できるプ</span>
<span class="t" style="left:1008.1px;top:572.2px;font-size:9.5px;line-height:13px;color:#404040;transform:scaleX(0.9500);">ランを紹介す</span>
<span class="t" style="left:1008.1px;top:586.1px;font-size:9.5px;line-height:13px;color:#404040;transform:scaleX(0.9500);">る</span>
<svg width="1387" height="855" viewBox="0 0 1387 855" style="mix-blend-mode:difference">
<line x1="381.50" y1="246.25" x2="381.50" y2="856" stroke="#fff" stroke-width="1" stroke-dasharray="1 5.772" shape-rendering="crispEdges"/>
<line x1="448.50" y1="246.25" x2="448.50" y2="856" stroke="#fff" stroke-width="1" stroke-dasharray="1 5.772" shape-rendering="crispEdges"/>
<line x1="516.50" y1="246.25" x2="516.50" y2="856" stroke="#fff" stroke-width="1" stroke-dasharray="1 5.772" shape-rendering="crispEdges"/>
<line x1="584.50" y1="246.25" x2="584.50" y2="856" stroke="#fff" stroke-width="1" stroke-dasharray="1 5.772" shape-rendering="crispEdges"/>
<line x1="651.50" y1="246.25" x2="651.50" y2="856" stroke="#fff" stroke-width="1" stroke-dasharray="1 5.772" shape-rendering="crispEdges"/>
<line x1="719.50" y1="246.25" x2="719.50" y2="856" stroke="#fff" stroke-width="1" stroke-dasharray="1 5.772" shape-rendering="crispEdges"/>
<line x1="787.50" y1="246.25" x2="787.50" y2="856" stroke="#fff" stroke-width="1" stroke-dasharray="1 5.772" shape-rendering="crispEdges"/>
<line x1="855.50" y1="246.25" x2="855.50" y2="856" stroke="#fff" stroke-width="1" stroke-dasharray="1 5.772" shape-rendering="crispEdges"/>
<line x1="922.50" y1="246.25" x2="922.50" y2="856" stroke="#fff" stroke-width="1" stroke-dasharray="1 5.772" shape-rendering="crispEdges"/>
<line x1="990.50" y1="246.25" x2="990.50" y2="856" stroke="#fff" stroke-width="1" stroke-dasharray="1 5.772" shape-rendering="crispEdges"/>
<line x1="1058.50" y1="246.25" x2="1058.50" y2="856" stroke="#fff" stroke-width="1" stroke-dasharray="1 5.772" shape-rendering="crispEdges"/>
<line x1="1126.50" y1="246.25" x2="1126.50" y2="856" stroke="#fff" stroke-width="1" stroke-dasharray="1 5.772" shape-rendering="crispEdges"/>
<line x1="1193.50" y1="246.25" x2="1193.50" y2="856" stroke="#fff" stroke-width="1" stroke-dasharray="1 5.772" shape-rendering="crispEdges"/>
<line x1="1261.50" y1="246.25" x2="1261.50" y2="856" stroke="#fff" stroke-width="1" stroke-dasharray="1 5.772" shape-rendering="crispEdges"/>
<line x1="1329.50" y1="246.25" x2="1329.50" y2="856" stroke="#fff" stroke-width="1" stroke-dasharray="1 5.772" shape-rendering="crispEdges"/>
<line x1="353.43" y1="294.50" x2="1388" y2="294.50" stroke="#fff" stroke-width="1" stroke-dasharray="1 5.774" shape-rendering="crispEdges"/>
<line x1="353.43" y1="361.50" x2="1388" y2="361.50" stroke="#fff" stroke-width="1" stroke-dasharray="1 5.774" shape-rendering="crispEdges"/>
<line x1="353.43" y1="429.50" x2="1388" y2="429.50" stroke="#fff" stroke-width="1" stroke-dasharray="1 5.774" shape-rendering="crispEdges"/>
<line x1="353.43" y1="497.50" x2="1388" y2="497.50" stroke="#fff" stroke-width="1" stroke-dasharray="1 5.774" shape-rendering="crispEdges"/>
<line x1="353.43" y1="565.50" x2="1388" y2="565.50" stroke="#fff" stroke-width="1" stroke-dasharray="1 5.774" shape-rendering="crispEdges"/>
<line x1="353.43" y1="632.50" x2="1388" y2="632.50" stroke="#fff" stroke-width="1" stroke-dasharray="1 5.774" shape-rendering="crispEdges"/>
<line x1="353.43" y1="700.50" x2="1388" y2="700.50" stroke="#fff" stroke-width="1" stroke-dasharray="1 5.774" shape-rendering="crispEdges"/>
<line x1="353.43" y1="768.50" x2="1388" y2="768.50" stroke="#fff" stroke-width="1" stroke-dasharray="1 5.774" shape-rendering="crispEdges"/>
<line x1="353.43" y1="835.50" x2="1388" y2="835.50" stroke="#fff" stroke-width="1" stroke-dasharray="1 5.774" shape-rendering="crispEdges"/>
</svg>
<svg width="1387" height="855" viewBox="0 0 1387 855">
<rect x="540.5" y="310.5" width="764" height="509" fill="none" stroke="#595959" stroke-width="1" shape-rendering="crispEdges"/>
<circle cx="541.00" cy="311.00" r="6.00" fill="#fff" stroke="#505050" stroke-width="2.1"/>
<circle cx="541.00" cy="820.00" r="6.00" fill="#fff" stroke="#505050" stroke-width="2.1"/>
<circle cx="923.00" cy="311.00" r="6.00" fill="#fff" stroke="#505050" stroke-width="2.1"/>
<circle cx="923.00" cy="820.00" r="6.00" fill="#fff" stroke="#505050" stroke-width="2.1"/>
<circle cx="1305.00" cy="311.00" r="6.00" fill="#fff" stroke="#505050" stroke-width="2.1"/>
<circle cx="1305.00" cy="820.00" r="6.00" fill="#fff" stroke="#505050" stroke-width="2.1"/>
<circle cx="1305.00" cy="565.50" r="6.00" fill="#fff" stroke="#505050" stroke-width="2.1"/>
<line x1="1156.5" y1="497" x2="1156.5" y2="528" stroke="#595959" stroke-width="1" shape-rendering="crispEdges"/>
<rect x="1119.5" y="527.5" width="75" height="74" fill="none" stroke="#595959" stroke-width="1" shape-rendering="crispEdges"/>
<circle cx="1119.80" cy="527.85" r="5.85" fill="#fff" stroke="#505050" stroke-width="2.1"/>
<circle cx="1119.80" cy="601.85" r="5.85" fill="#fff" stroke="#505050" stroke-width="2.1"/>
<circle cx="1156.00" cy="527.85" r="5.85" fill="#fff" stroke="#505050" stroke-width="2.1"/>
<circle cx="1156.00" cy="601.85" r="5.85" fill="#fff" stroke="#505050" stroke-width="2.1"/>
<circle cx="1195.00" cy="527.85" r="5.85" fill="#fff" stroke="#505050" stroke-width="2.1"/>
<circle cx="1195.00" cy="601.85" r="5.85" fill="#fff" stroke="#505050" stroke-width="2.1"/>
<circle cx="1119.80" cy="565.20" r="5.85" fill="#fff" stroke="#505050" stroke-width="2.1"/>
<circle cx="1195.00" cy="565.20" r="5.85" fill="#fff" stroke="#505050" stroke-width="2.1"/>
<path d="M1167.19 485.15 A9.90 9.90 0 1 0 1162.55 493.90" fill="none" stroke="#505050" stroke-width="6.2"/>
<path d="M1158.8 484.4 L1175.0 484.4 L1166.9 492.3 Z" fill="#fff" stroke="#505050" stroke-width="1.9" stroke-linejoin="miter"/>
<path d="M1167.19 485.85 A9.90 9.90 0 1 0 1163.12 493.51" fill="none" stroke="#fff" stroke-width="2.1"/>
<rect x="1165.3" y="483.2" width="3.6" height="2.9" fill="#fff"/>
<line x1="922.5" y1="229" x2="922.5" y2="855" stroke="#a89c9c" stroke-width="1" stroke-dasharray="3 3" shape-rendering="crispEdges"/>
<line x1="295" y1="565.5" x2="1387" y2="565.5" stroke="#a89c9c" stroke-width="1" stroke-dasharray="3 3" shape-rendering="crispEdges"/>
</svg>
<div class="a" style="left:529px;top:553.5px;width:21px;height:21px;background:#fff;border:1px solid #c6c6c6;box-sizing:content-box;border-radius:1px"></div>
<svg width="1387" height="855" viewBox="0 0 1387 855"><path d="M542 560.4 L536.6 565.5 L542 570.6" fill="none" stroke="#a3a3a3" stroke-width="2"/><line x1="523" y1="565.5" x2="553" y2="565.5" stroke="#a89c9c" stroke-width="1" stroke-dasharray="3 3" shape-rendering="crispEdges"/></svg>
</body></html>
